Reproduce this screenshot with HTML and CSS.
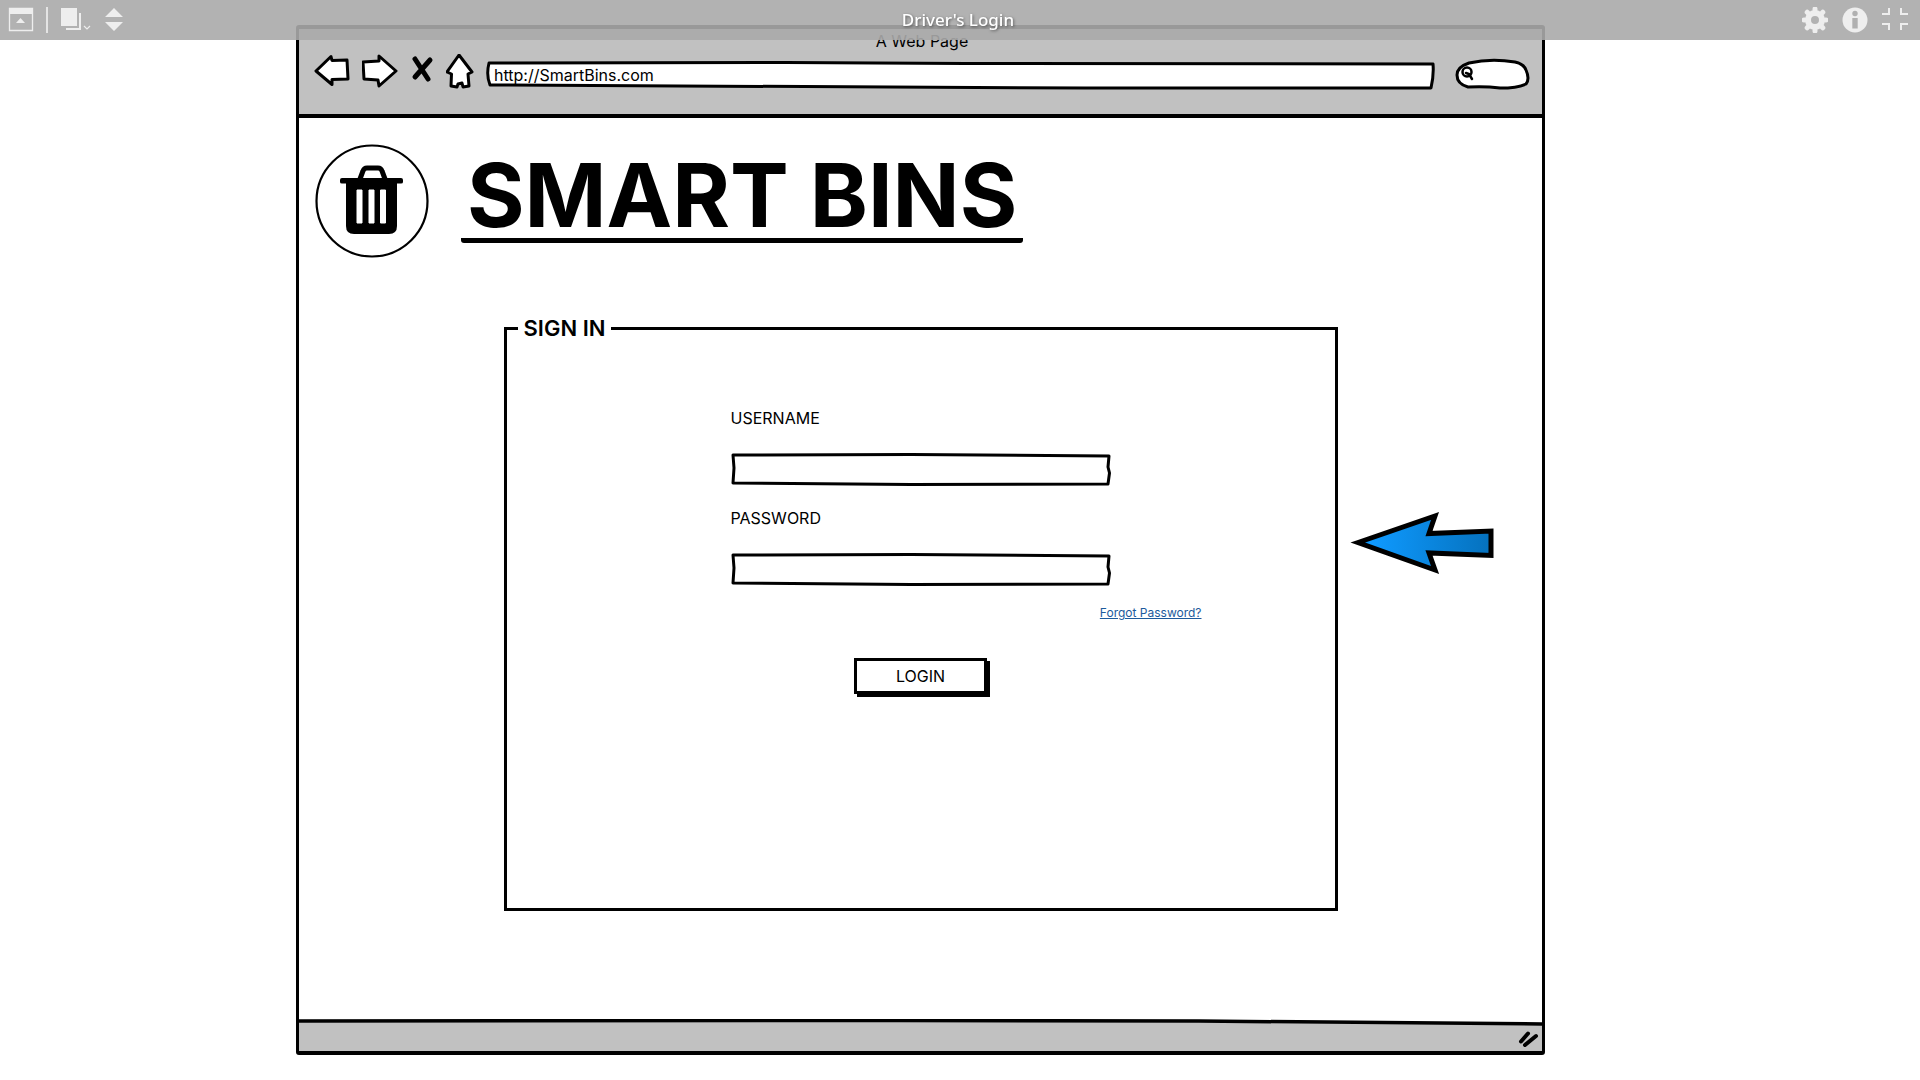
FILE: index.html
```html
<!DOCTYPE html>
<html lang="en">
<head>
<meta charset="utf-8">
<title>Driver's Login</title>
<meta name="viewport" content="width=device-width, initial-scale=1">
<link rel="stylesheet" href="styles.css">
</head>
<body>
<header class="toolbar">
  <div class="toolbar-group">
    <button class="tool" type="button" aria-label="Hide toolbar">
      <svg width="26" height="26" viewBox="0 0 26 26"><path d="M1.500 1.500h23v22h-23z" fill="none" stroke="#eee" stroke-width="1.300"/><path d="M1 1h24v6H1zM8 16l4.500-5 4.500 5z" fill="#eee"/></svg>
    </button>
    <span class="divider"></span>
    <button class="tool" type="button" aria-label="Pages">
      <svg width="32" height="26" viewBox="0 0 32 26"><path d="M1 1h16v18H1zM19 6h2v17H6v-2h13z" fill="#eee"/><path d="M24 19l3 3 3-3" fill="none" stroke="#eee" stroke-width="1.200"/></svg>
    </button>
    <button class="tool" type="button" aria-label="Previous or next page">
      <svg width="20" height="26" viewBox="0 0 20 26"><path d="M1 10l9-9 9 9zM1 15h18l-9 9z" fill="#eee"/></svg>
    </button>
  </div>
  <h1 class="toolbar-title">Driver's Login</h1>
  <div class="toolbar-group toolbar-end">
    <button class="tool" type="button" aria-label="Settings">
      <svg width="26" height="26" viewBox="0 0 26 26"><circle cx="13" cy="13" r="7" fill="none" stroke="#eee" stroke-width="6"/><path d="M13 3v-1M13 24v-1M3 13h-1M24 13h-1M5.900 5.900l-.7-.7M20.800 20.800l-.7-.7M5.900 20.100l-.7.7M20.800 5.200l-.7.7" fill="none" stroke="#eee" stroke-width="5" stroke-linecap="round"/></svg>
    </button>
    <button class="tool" type="button" aria-label="Information">
      <svg width="26" height="26" viewBox="0 0 26 26"><circle cx="13" cy="13" r="12.500" fill="#eee"/><circle cx="13" cy="6.500" r="2.700" fill="#b0b0b0"/><path d="M10.300 11h5.400v10.500h-5.400z" fill="#b0b0b0"/></svg>
    </button>
    <button class="tool" type="button" aria-label="Exit full screen">
      <svg width="26" height="26" viewBox="0 0 26 26"><path d="M0 7h7V1M26 7h-7V1M0 17h7v6M26 17h-7v6" fill="none" stroke="#eee" stroke-width="2"/></svg>
    </button>
  </div>
</header>

<main class="canvas">
  <div class="browser">
    <header class="chrome">
      <p class="chrome-title">A Web Page</p>
      <div class="chrome-bar">
        <button class="nav" type="button" aria-label="Back">
          <svg width="36" height="36" viewBox="0 0 36 36"><path d="M2 17L17 2.500l1 4 15-.5 1 19-16 .5v5z"/></svg>
        </button>
        <button class="nav" type="button" aria-label="Forward">
          <svg width="36" height="36" viewBox="0 0 36 36"><path d="M34 17L17 2v5L1 8l1 17 14 1 1 6z"/></svg>
        </button>
        <button class="nav" type="button" aria-label="Stop">
          <svg width="24" height="36" viewBox="0 0 24 36"><path d="M5 5l13 20M20 6L5 23" stroke-width="5"/></svg>
        </button>
        <button class="nav" type="button" aria-label="Home">
          <svg width="28" height="36" viewBox="0 0 28 36"><path d="M13 1L26 18l-4 2 1 12-6 1-1-4-4 1-1 3-6-1 .5-12L1 18z"/></svg>
        </button>
        <input class="address" type="text" aria-label="Address" value="http://SmartBins.com">
        <label class="search">
          <svg width="14" height="16" viewBox="0 0 14 16"><circle cx="6" cy="6" r="4.500" fill="none" stroke="#000" stroke-width="2.500"/><path d="M5 7l3 1 3 5" fill="none" stroke="#000" stroke-width="2.500" stroke-linecap="round"/></svg>
          <input class="search-input" type="search" aria-label="Search">
        </label>
      </div>
    </header>

    <div class="page">
      <div class="brand">
        <svg class="brand-mark" width="114" height="114" viewBox="0 0 114 114">
          <circle cx="57" cy="57" r="55.500" fill="#fff" stroke="#000" stroke-width="2.200"/>
          <path d="M45 35l3-8q1-3 4-3h11q3 0 4 3l3 8" fill="none" stroke="#000" stroke-width="5"/>
          <path d="M27 34h59q2 0 2 2v2q0 1.500-2 1.500h-4V82q0 8-8 8H39q-8 0-8-8V39.500h-4q-2 0-2-1.500v-2q0-2 2-2z"/>
          <path d="M42 46h5v33h-5zM54 46h5v33h-5zM65.500 46h5v33h-5z" fill="#fff" stroke="#fff" stroke-linejoin="round"/>
        </svg>
        <h2 class="brand-name">SMART BINS</h2>
      </div>

      <div class="stage">
        <form class="form">
          <fieldset class="sign-in">
            <legend class="legend">SIGN IN</legend>
            <div class="fields">
              <label class="label" for="username">USERNAME</label>
              <input class="field" id="username" type="text">
              <label class="label" for="password">PASSWORD</label>
              <input class="field" id="password" type="password">
            </div>
            <div class="forgot"><a class="forgot-link" href="#">Forgot Password?</a></div>
            <button class="login" type="button">LOGIN</button>
          </fieldset>
        </form>
        <svg class="pointer" width="146" height="64" viewBox="0 0 146 64">
          <defs><linearGradient id="blue"><stop offset="0.100" stop-color="#0f9aff"/><stop offset="1" stop-color="#0571bd"/></linearGradient></defs>
          <path d="M8 31.500L85 5l-6 17.500 62-2.500v24.500L79 42l6 17z" fill="url(#blue)" stroke="#000" stroke-width="5"/>
        </svg>
      </div>
    </div>

    <footer class="status">
      <svg width="24" height="20" viewBox="0 0 24 20"><path d="M5 12.500L12 4.500M9 16L20 7" fill="none" stroke="#000" stroke-width="4" stroke-linecap="round"/></svg>
    </footer>
  </div>
</main>
</body>
</html>
```
FILE: styles.css
```css
* {
  box-sizing: border-box;
}

body {
  margin: 0;
  background: #fff;
  color: #000;
  font-family: Inter, "Noto Sans", sans-serif;
  font-size: 16px;
}

button,
input {
  margin: 0;
  padding: 0;
  border: 0;
  background: none;
  color: inherit;
  font: inherit;
}

button {
  cursor: pointer;
}

svg {
  display: block;
}

/* Player toolbar, floating over the canvas */
.toolbar {
  position: fixed;
  inset: 0 0 auto;
  z-index: 1;
  display: grid;
  grid-template-columns: 1fr auto 1fr;
  align-items: center;
  height: 40px;
  padding: 0 12px 0 8px;
  background: rgba(170, 170, 170, 0.9);
}

.toolbar-group {
  display: flex;
  align-items: center;
  gap: 12px;
}

.toolbar-end {
  justify-content: flex-end;
  gap: 14px;
}

.divider {
  width: 2px;
  height: 26px;
  background: #e4e4e4;
}

.toolbar-title {
  margin: 0;
  color: #fff;
  font-family: "Noto Sans", sans-serif;
  font-size: 17px;
  font-weight: 500;
  line-height: 24px;
  text-shadow: 1px 1px 3px rgba(0, 0, 0, 0.5);
}

/* Sketched browser window */
.canvas {
  display: grid;
  grid-template-columns: 296fr minmax(0, 1249fr) 375fr;
  padding-top: 25px;
}

.browser {
  grid-column: 2;
  border: 3px solid #000;
  border-width: 4px 3px;
  border-radius: 3px;
}

.chrome {
  padding: 0 12px 24px 15px;
  border-bottom: 4px solid #000;
  background: #c1c1c1;
}

.chrome-title {
  margin: 0;
  font-size: 16px;
  line-height: 24px;
  text-align: center;
}

.chrome-bar {
  display: flex;
  align-items: flex-end;
  gap: 12px;
  height: 37px;
}

.nav svg {
  fill: #fff;
  stroke: #000;
  stroke-width: 3px;
  stroke-linecap: round;
  stroke-linejoin: round;
}

.address {
  flex: 1;
  min-width: 0;
  height: 29px;
  padding: 0 8px 2px;
  background: url("data:image/svg+xml,%3Csvg xmlns='http://www.w3.org/2000/svg' viewBox='0 0 950 29' preserveAspectRatio='none'%3E%3Cpath d='M3 2L300 1.500 480 2.500 948 3Q949 14 946 27L600 27 4 24Q0 14 3 2z' fill='white' stroke='black' stroke-width='3' stroke-linejoin='round'/%3E%3C/svg%3E") 0 0 / 100% 100% no-repeat;
}

.search {
  display: flex;
  align-items: center;
  width: 75px;
  height: 32px;
  margin-left: 8px;
  padding-left: 6px;
  background: url("data:image/svg+xml,%3Csvg xmlns='http://www.w3.org/2000/svg' viewBox='0 0 75 32' preserveAspectRatio='none'%3E%3Cpath d='M13 29Q2 26 2 17 2 9 14 5 36 0 60 4 69 6 71 12 75 21 71 26 62 30 45 30 30 28 13 29z' fill='white' stroke='black' stroke-width='3'/%3E%3C/svg%3E") 0 0 / 100% 100% no-repeat;
}

.search-input {
  width: 48px;
}

/* Page content */
.page {
  padding: 26px 16px 108px;
}

.brand {
  display: flex;
  align-items: flex-start;
  gap: 32px;
}

.brand-name {
  margin: 0;
  padding: 8px 6px 0;
  border-bottom: 5px solid #000;
  border-radius: 3px;
  font-size: 88px;
  font-weight: 700;
  line-height: 86px;
  white-space: nowrap;
}

.stage {
  display: grid;
  grid-template-columns: 1fr minmax(0, 834px) 1fr;
  padding-top: 58px;
}

.form {
  grid-column: 2;
}

.sign-in {
  display: flex;
  flex-direction: column;
  align-items: center;
  min-width: 0;
  min-height: 595px;
  margin: 0;
  padding: 66px 0 0;
  border: 3px solid #000;
}

.legend {
  margin-left: 11px;
  padding: 0 6px;
  font-size: 22px;
  font-weight: 600;
  line-height: 24px;
}

.fields {
  display: flex;
  flex-direction: column;
  width: 380px;
  max-width: 100%;
}

.label {
  padding-bottom: 23px;
  font-size: 16px;
  line-height: 24px;
}

.field {
  width: 100%;
  height: 33px;
  margin-bottom: 20px;
  padding: 0 8px;
  background: url("data:image/svg+xml,%3Csvg xmlns='http://www.w3.org/2000/svg' viewBox='0 0 380 33' preserveAspectRatio='none'%3E%3Cpath d='M2 2L180 1.500 378 3 377 14 378.500 20 377 31 180 31.500 2 30 3 15z' fill='white' stroke='black' stroke-width='3' stroke-linejoin='round'/%3E%3C/svg%3E") 0 0 / 100% 100% no-repeat;
}

.forgot {
  align-self: stretch;
  padding: 0 133px 38px 0;
  font-size: 12px;
  line-height: 14px;
  text-align: right;
}

.forgot-link {
  color: #1c5a9c;
}

.login {
  width: 133px;
  height: 36px;
  border: 3px solid #000;
  box-shadow: 3px 3px 0 #000;
  font-size: 16px;
}

.pointer {
  margin: 195px 0 0 12px;
}

.status {
  display: flex;
  justify-content: flex-end;
  align-items: flex-end;
  height: 32px;
  padding: 0 2px 2px 0;
  background: url("data:image/svg+xml,%3Csvg xmlns='http://www.w3.org/2000/svg' viewBox='0 0 1243 32' preserveAspectRatio='none'%3E%3Cpath d='M-5 2L600 1.500 900 2 1250 5V40H-5z' fill='%23c1c1c1' stroke='black' stroke-width='3.500'/%3E%3C/svg%3E") 0 0 / 100% 100% no-repeat;
}
```
